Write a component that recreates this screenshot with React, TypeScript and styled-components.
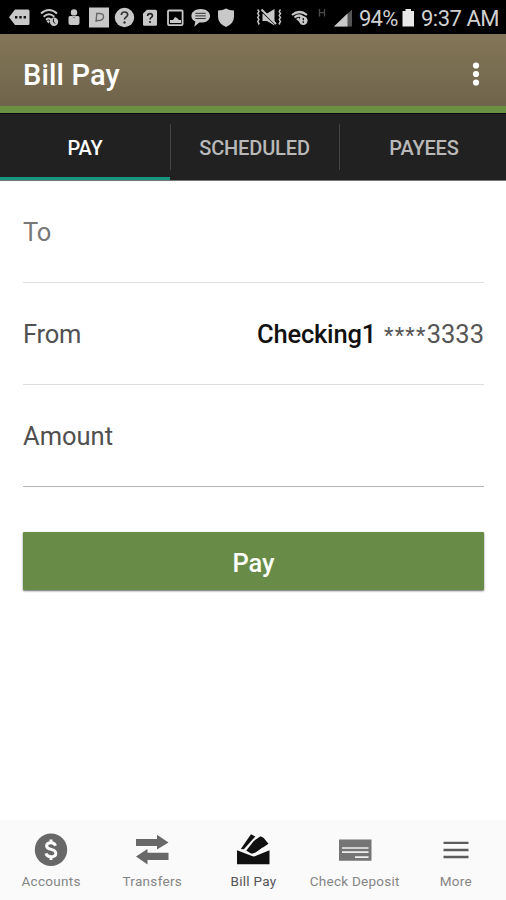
import React from "react";
import styled, { createGlobalStyle } from "styled-components";

const GlobalStyle = createGlobalStyle`
  * { box-sizing: border-box; }
  body { margin: 0; background: #fff; }
`;

const Screen = styled.div`
  width: 506px;
  height: 900px;
  display: flex;
  flex-direction: column;
  overflow: hidden;
  background: #fff;
  font-family: Roboto, "Liberation Sans", sans-serif;
`;

const StatusBar = styled.div`
  height: 34px;
  flex: none;
  display: flex;
  align-items: center;
  background: #000;
  color: #d0d0d0;
`;

const StatusGlyph = styled.svg<{ $before: number }>`
  display: block;
  flex: none;
  height: 34px;
  margin-left: ${(p) => p.$before}px;
`;

const StatusText = styled.span<{ $before: number; $width: number; $spacing: number }>`
  flex: none;
  width: ${(p) => p.$width}px;
  margin-left: ${(p) => p.$before}px;
  letter-spacing: ${(p) => p.$spacing}px;
  font-size: 22px;
  line-height: 34px;
  padding-top: 3px;
  white-space: nowrap;
`;

const AppBar = styled.header`
  height: 79px;
  flex: none;
  display: flex;
  align-items: center;
  justify-content: space-between;
  padding: 0 26px 0 23px;
  background: linear-gradient(#837658, #6f644b);
  border-bottom: 7px solid #6a9042;
`;

const Title = styled.h1`
  margin: 9px 0 0;
  color: #fff;
  font-size: 29px;
  line-height: 36px;
  font-weight: 500;
  letter-spacing: 0.15px;
`;

const Overflow = styled.svg`
  display: block;
  margin-top: 7px;
`;

const Tabs = styled.nav`
  height: 68px;
  flex: none;
  display: grid;
  grid-template-columns: 170px 169px 167px;
  background: #212121;
  border-top: 1px solid #060a10;
  border-bottom: 1px solid #777;
`;

const Tab = styled.div<{ $active?: boolean; $divided?: boolean }>`
  display: flex;
  align-items: center;
  position: relative;
  justify-content: center;
  color: ${(p) => (p.$active ? "#fff" : "#b9b9b9")};
  font-size: 20px;
  font-weight: 500;
  letter-spacing: -0.15px;
  padding-top: 4px;
  border-bottom: 3px solid ${(p) => (p.$active ? "#159681" : "transparent")};

  &:last-child {
    padding-left: 3px;
  }

  &::after {
    content: "";
    display: ${(p) => (p.$divided ? "block" : "none")};
    position: absolute;
    right: -1px;
    top: 10px;
    width: 1px;
    height: 46px;
    background: #444;
  }
`;

const Form = styled.main`
  flex: 1;
  display: flex;
  flex-direction: column;
  padding: 0 22px 0 23px;
`;

const Field = styled.div<{ $strong?: boolean }>`
  height: 102px;
  display: flex;
  align-items: center;
  justify-content: space-between;
  border-bottom: 1px solid ${(p) => (p.$strong ? "#b4b4b4" : "#dedede")};
  color: #555;
  font-size: 25.5px;
  line-height: 32px;
`;

const Label = styled.span<{ $muted?: boolean; $spacing: number }>`
  color: ${(p) => (p.$muted ? "#777" : "#505050")};
  letter-spacing: ${(p) => p.$spacing}px;
`;

const Account = styled.span`
  display: flex;
  gap: 8px;
`;

const AccountName = styled.span`
  color: #111;
  font-weight: 500;
  letter-spacing: -0.2px;
`;

const AccountNumber = styled.span`
  display: flex;
  color: #555;
`;

const Mask = styled.span`
  padding-top: 4px;
  font-size: 22px;
  line-height: 28px;
  letter-spacing: 1.2px;
`;

const PayButton = styled.button`
  height: 58px;
  margin: 45px 0 0;
  border: 0;
  padding: 4px 0 0;
  border-radius: 1px;
  background: #688c47;
  box-shadow: 0 1px 2px rgba(0, 0, 0, 0.6);
  color: #fff;
  font-family: inherit;
  font-size: 25.5px;
  font-weight: 500;
`;

const BottomNav = styled.nav`
  height: 80px;
  flex: none;
  display: grid;
  grid-template-columns: repeat(5, 1fr);
  background: #fafafa;
`;

const NavItem = styled.div<{ $active?: boolean; $spacing: number }>`
  display: flex;
  flex-direction: column;
  align-items: center;
  padding: 12px 0 0 1px;
  color: ${(p) => (p.$active ? "#555" : "#858585")};
  font-size: 13.5px;
  line-height: 18px;
  letter-spacing: ${(p) => p.$spacing}px;
  white-space: nowrap;

  svg {
    display: block;
    margin-bottom: 4px;
  }
`;

type GlyphProps = { x: number; w: number; before: number; children: React.ReactNode };

const Glyph = ({ x, w, before, children }: GlyphProps) => (
  <StatusGlyph $before={before} width={w} height={34} viewBox={`${x} 0 ${w} 34`} fill="#c8c8c8">
    {children}
  </StatusGlyph>
);

const StatusIcons = () => (
  <>
    <Glyph x={9} w={21} before={9}>
      <path d="M15 9.5H28a1.5 1.5 0 0 1 1.500 1.500V23.500A1.500 1.500 0 0 1 28 25H15L9 17.200Z" />
      <path d="M15 16h2.400v2.400H15zm4.300 0h2.400v2.400h-2.400zm4.300 0H26v2.400h-2.400z" fill="#111" />
    </Glyph>
    <Glyph x={40} w={19} before={10}>
      <g fill="none" stroke="#c8c8c8" strokeWidth="1.900">
        <path d="M41 13.500q8-7 16 0M43.600 16.700q5.400-4.700 10.800 0M46 19.800q3-2.500 5 0" />
      </g>
      <path d="M46.500 21q1.500-1.500 3.500 0l-1.500 2.500z" />
      <circle cx="54" cy="21.700" r="4.200" />
      <path d="M53.400 18.600v3.500l2 1.300" fill="none" stroke="#111" strokeWidth="1" />
    </Glyph>
    <Glyph x={67} w={14} before={8}>
      <circle cx="74" cy="12.400" r="3.200" />
      <path d="M70 16h8q1.500 0 1.500 1.500V23q0 2-2 2h-7q-2 0-2-2v-5.500q0-1.500 1.500-1.500Z" />
      <path d="m72.500 16.500 1.500 1.500 1.500-1.500" fill="none" stroke="#777" strokeWidth="0.900" />
    </Glyph>
    <Glyph x={89} w={20} before={8}>
      <path d="M89 7.500h20v20H89z" />
      <path d="m96 22 .8-8.500h3.200q4 .3 3.500 3.700-.7 3.300-4 3.300H96.500" fill="none" stroke="#666" strokeWidth="1.400" />
    </Glyph>
    <Glyph x={114} w={21} before={5}>
      <circle cx="124.500" cy="17.500" r="9.700" />
      <path d="M121.300 15q.2-3 3.200-3t3.200 2.600q0 1.500-1.800 2.700-1.400 1-1.400 2.300" fill="none" stroke="#333" strokeWidth="1.700" />
      <circle cx="124.500" cy="22.500" r="1.200" fill="#333" />
    </Glyph>
    <Glyph x={143} w={14} before={8}>
      <path d="M147 9.700h8.500q1.500 0 1.500 1.500v13q0 1.500-1.500 1.500h-11q-1.500 0-1.500-1.500V13.500Z" />
      <path d="M147.500 16q.2-2.400 2.500-2.400t2.500 2q0 1.200-1.400 2.100-1.100.8-1.100 1.800" fill="none" stroke="#222" strokeWidth="1.600" />
      <circle cx="150" cy="22" r="1.100" fill="#222" />
    </Glyph>
    <Glyph x={167} w={17} before={10}>
      <rect x="168" y="10.500" width="14.600" height="14.600" rx="1" fill="none" stroke="#c8c8c8" strokeWidth="1.800" />
      <path d="M170 23v-3h3l2-3 2 1 2 2h2v3z" />
    </Glyph>
    <Glyph x={191} w={20} before={7}>
      <path d="M200.700 9c5.200 0 9.300 2.800 9.300 6.900s-4.100 6.700-9.300 6.700h-1.400l-5 4.200 1-5.300c-2.500-1.200-3.900-3.200-3.900-5.600 0-4.100 4.100-6.900 9.300-6.900Z" />
      <path d="M195.300 13.300h10.500M195.300 15.900h10.500M195.300 18.500h10.500" stroke="#333" strokeWidth="1" />
    </Glyph>
    <Glyph x={217} w={18} before={6}>
      <path d="M226 8.500q3 2 8 2v6q0 7-8 10.500-8-3.500-8-10.500v-6q5 0 8-2Z" />
    </Glyph>
    <Glyph x={256} w={27} before={21}>
      <path d="M262.500 13.500h4.500l7.500-4.500v16.500l-7.500-4.500h-4.500z" />
      <path d="m261.500 11.300 14 13.500" stroke="#000" strokeWidth="1.200" />
      <path d="m261.500 9.500 14.500 14.500" stroke="#c8c8c8" strokeWidth="2" />
      <path d="m257.700 9.500 1.300 2-1.300 2 1.300 2-1.300 2 1.300 2-1.300 2 1.300 2-.7 1M280.500 9.500l-1.300 2 1.300 2-1.300 2 1.300 2-1.300 2 1.300 2-1.300 2 .7 1" fill="none" stroke="#c8c8c8" strokeWidth="1.400" />
    </Glyph>
    <Glyph x={291} w={18} before={8}>
      <path d="M292 15q7.500-6 15 0M294.500 17.500q4.500-4 9 0" fill="none" stroke="#c8c8c8" strokeWidth="2.200" />
      <path d="m296 19 3-1.500 1 5z" />
      <circle cx="303.300" cy="20.600" r="4.300" />
      <path d="M303.300 18v2.200M303.300 21.300v1.800" stroke="#111" strokeWidth="1.300" />
    </Glyph>
    <Glyph x={318} w={8} before={9}>
      <path d="M319.500 9v7.500M324.500 9v7.500M319.500 12.600h5" fill="none" stroke="#4c4c4c" strokeWidth="1.300" />
    </Glyph>
    <Glyph x={334} w={19} before={8}>
      <path d="M334 26.500 352 9.500v17z" fill="#555" />
      <path d="M334 26.500 347.500 13.500v13z" />
    </Glyph>
  </>
);

const AccountsIcon = () => (
  <svg width="36" height="36" viewBox="0 0 36 36">
    <circle cx="18" cy="17.700" r="16.200" fill="#686868" />
    <path d="M22.500 13.700q-.9-3-4.600-3-4.300 0-4.300 3.100 0 2.600 4.500 3.600 4.700 1 4.700 4 0 3.300-4.800 3.300-4.200 0-5-3.300M18 7.500v3.400M18 24.500v3.400" fill="none" stroke="#fafafa" strokeWidth="3" />
  </svg>
);

const TransfersIcon = () => (
  <svg width="36" height="36" viewBox="0 0 36 36" fill="#686868">
    <path d="M2 7h21V2.700L34.500 10.400 23 17.600V14H2z" />
    <path d="M34.500 20.800H13.500V17L2 24.400l11.500 8V28h21z" />
  </svg>
);

const BillPayIcon = () => (
  <svg width="36" height="36" viewBox="0 0 36 36" fill="#111">
    <path d="M2 18.200 17 24q2 1 4-.2l13.500-5.600V32.300H2z" />
    <path d="M5.800 17 16 2.300l4.300 2.200L8.800 17.300z" />
    <path d="m11.300 18.500 7.500-9.500L25.500 4.300l3 1.500 5 6L20.500 20.400l-4 1.600z" />
    <path d="m7 18.700 10 3.900 4-.9L28 16" fill="none" stroke="#fafafa" strokeWidth="1.400" />
  </svg>
);

const CheckIcon = () => (
  <svg width="36" height="36" viewBox="0 0 36 36">
    <path d="M2 7.500h32.500v21.300H2z" fill="#757575" />
    <path d="M5 16h26.500M5 20.200h26.500M18 25.200h13.500" stroke="#eee" strokeWidth="1.700" />
  </svg>
);

const MoreIcon = () => (
  <svg width="36" height="36" viewBox="0 0 36 36">
    <path d="M5.500 10.900h25M5.500 18h25M5.500 25h25" stroke="#5c5c5c" strokeWidth="2.400" />
  </svg>
);

export default function App() {
  return (
    <>
      <GlobalStyle />
      <Screen>
        <StatusBar>
          <StatusIcons />
          <StatusText $before={6} $width={40} $spacing={-0.8}>94%</StatusText>
          <Glyph x={402} w={12} before={3}>
            <path d="M402.500 11h3V9h5.500v2h3v15.500h-11.500z" fill="#e8e8e8" />
          </Glyph>
          <StatusText $before={7} $width={82} $spacing={-0.5}>9:37 AM</StatusText>
        </StatusBar>
        <AppBar>
          <Title>Bill Pay</Title>
          <Overflow width="8" height="26" viewBox="0 0 8 26" fill="#fff">
            <circle cx="4" cy="4.500" r="3.100" />
            <circle cx="4" cy="13" r="3.100" />
            <circle cx="4" cy="21.500" r="3.100" />
          </Overflow>
        </AppBar>
        <Tabs>
          <Tab $active $divided>PAY</Tab>
          <Tab $divided>SCHEDULED</Tab>
          <Tab>PAYEES</Tab>
        </Tabs>
        <Form>
          <Field><Label $muted $spacing={-0.3}>To</Label></Field>
          <Field>
            <Label $spacing={-0.2}>From</Label>
            <Account>
              <AccountName>Checking1</AccountName>
              <AccountNumber>
                <Mask>****</Mask>
                3333
              </AccountNumber>
            </Account>
          </Field>
          <Field $strong><Label $spacing={0}>Amount</Label></Field>
          <PayButton>Pay</PayButton>
        </Form>
        <BottomNav>
          <NavItem $spacing={0.3}><AccountsIcon />Accounts</NavItem>
          <NavItem $spacing={0.3}><TransfersIcon />Transfers</NavItem>
          <NavItem $active $spacing={0.3}><BillPayIcon />Bill Pay</NavItem>
          <NavItem $spacing={0.25}><CheckIcon />Check Deposit</NavItem>
          <NavItem $spacing={0.3}><MoreIcon />More</NavItem>
        </BottomNav>
      </Screen>
    </>
  );
}
